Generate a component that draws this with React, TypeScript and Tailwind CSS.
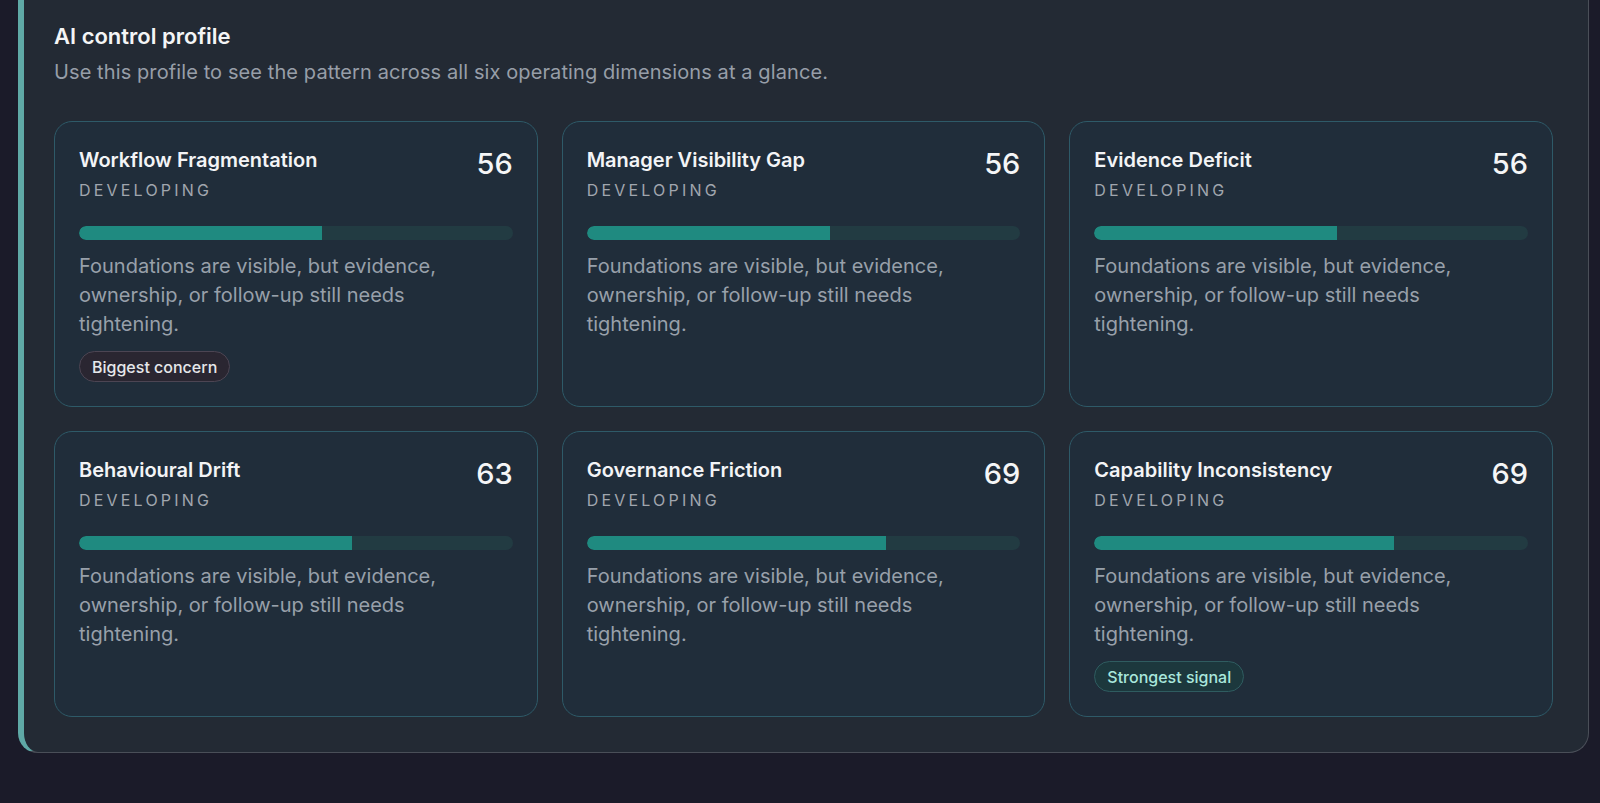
import React from "react";

type Dimension = {
  name: string;
  score: number;
  badge?: "concern" | "signal";
};

const dimensions: Dimension[] = [
  { name: "Workflow Fragmentation", score: 56, badge: "concern" },
  { name: "Manager Visibility Gap", score: 56 },
  { name: "Evidence Deficit", score: 56 },
  { name: "Behavioural Drift", score: 63 },
  { name: "Governance Friction", score: 69 },
  { name: "Capability Inconsistency", score: 69, badge: "signal" },
];

function DimensionCard({ d }: { d: Dimension }) {
  return (
    <div className="flex flex-col rounded-[18px] border border-[#2e5a68] bg-[#202d3a] px-6 pb-6 pt-6">
      <div className="flex items-start justify-between">
        <div className="flex flex-col">
          <div className="text-[20px] font-semibold leading-[28px] text-[#f3f4f6]">{d.name}</div>
          <div className="mt-[6px] text-[16px] leading-[20px] tracking-[0.2em] text-[#a0a6ae]">
            DEVELOPING
          </div>
        </div>
        <div className="text-[29px] font-medium leading-[36px] text-[#f5f6f7]">{d.score}</div>
      </div>
      <div className="mt-[26px] h-[14px] w-full overflow-hidden rounded-full bg-[#223b42]">
        <div className="h-full rounded-l-full bg-[#1f8a80]" style={{ width: `${d.score}%` }} />
      </div>
      <p className="mt-3 max-w-[410px] text-[20px] leading-[29px] text-[#98a0aa]">
        Foundations are visible, but evidence, ownership, or follow-up still needs tightening.
      </p>
      {d.badge === "concern" && (
        <div className="mt-3">
          <span className="inline-flex h-[31px] items-center rounded-full border border-[#4c4553] bg-[#2a2631] px-3 text-[16px] font-medium text-[#e6e7ea]">
            Biggest concern
          </span>
        </div>
      )}
      {d.badge === "signal" && (
        <div className="mt-3">
          <span className="inline-flex h-[31px] items-center rounded-full border border-[#2f5c60] bg-[#1c383d] px-3 text-[16px] font-medium text-[#a9e7dc]">
            Strongest signal
          </span>
        </div>
      )}
    </div>
  );
}

export default function App() {
  return (
    <div className="min-h-[803px] w-full bg-[#1b1b29] pl-[18px] font-['Inter',sans-serif]">
      <section className="w-[1571px] rounded-b-[20px] border-b border-l-[6px] border-r border-b-[#4a4f58] border-l-[#5fa9a6] border-r-[#4a4f58] bg-[#232a34] pb-[35px] pl-[30px] pr-[35px] pt-[22px]">
        <h2 className="text-[22px] font-semibold leading-[28px] text-[#f4f5f6]">AI control profile</h2>
        <p className="mt-2 text-[20px] leading-[28px] tracking-[0.1px] text-[#979ea8]">
          Use this profile to see the pattern across all six operating dimensions at a glance.
        </p>
        <div className="mt-[35px] grid grid-cols-3 gap-6">
          {dimensions.map((d) => (
            <DimensionCard key={d.name} d={d} />
          ))}
        </div>
      </section>
    </div>
  );
}
